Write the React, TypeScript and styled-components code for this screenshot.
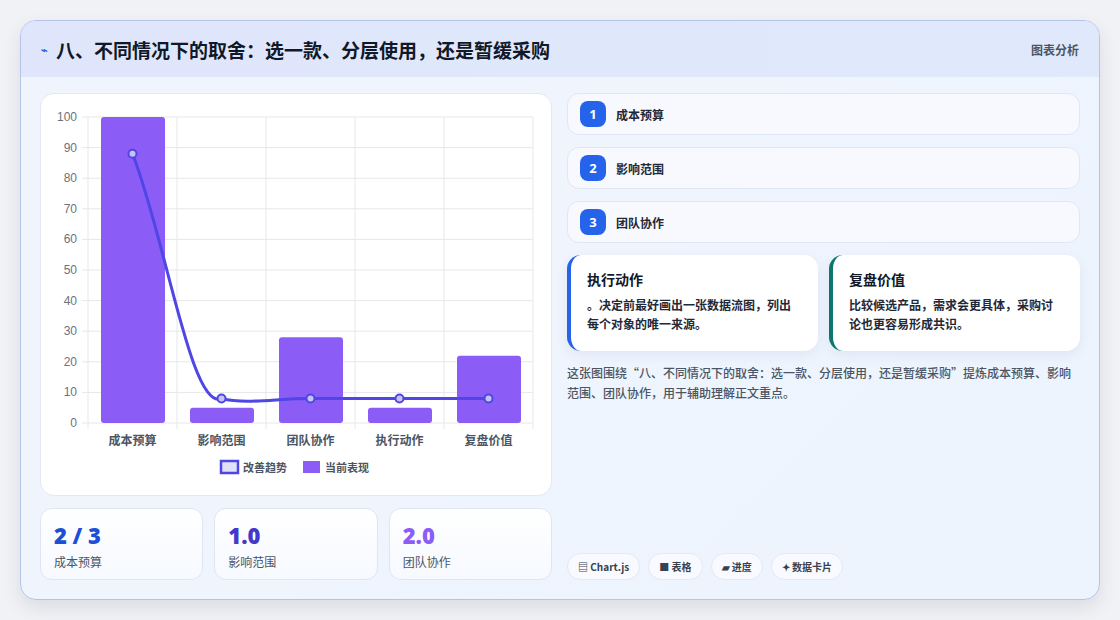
import React from "react";
import styled, { createGlobalStyle } from "styled-components";

const Global = createGlobalStyle`
  html, body { margin: 0; padding: 0; background: #f1f2f5; }
  body { font-family: "Noto Sans CJK SC", "Noto Sans", sans-serif; }
`;

const Page = styled.div`
  width: 1120px; height: 620px; box-sizing: border-box; padding: 20px;
`;
const Card = styled.div`
  height: 580px; box-sizing: border-box; border: 1px solid #b4c3ea; border-radius: 16px;
  background: linear-gradient(135deg, #f1f4fd, #edf4fe); overflow: hidden;
  box-shadow: 0 8px 18px rgba(60, 70, 110, 0.12);
  display: flex; flex-direction: column;
`;
const Header = styled.div`
  height: 56px; flex: none; display: flex; align-items: center; justify-content: space-between;
  padding: 0 20px; background: linear-gradient(90deg, #dfe6fb, #e0e9fc);
`;
const Title = styled.h1`
  margin: 0; font-size: 19px; font-weight: 700; color: #111827; display: flex; align-items: center; gap: 8px;
`;
const Bolt = styled.span` font-size: 11px; color: #2f5fd8; `;
const HeaderTag = styled.span` font-size: 12px; color: #4b5563; font-weight: 600; `;
const Body = styled.div`
  flex: 1; display: grid; grid-template-columns: 512px 513px; gap: 15px; padding: 16px 19px 19px 19px;
`;
const Col = styled.div` display: flex; flex-direction: column; gap: 12px; `;
const ChartCard = styled.div`
  height: 403px; background: #fff; border: 1px solid #e3e8f3; border-radius: 14px; box-sizing: border-box;
`;
const Stats = styled.div` display: grid; grid-template-columns: repeat(3, 1fr); gap: 11px; `;
const Stat = styled.div`
  height: 72px; box-sizing: border-box; border: 1px solid #dfe6f3; border-radius: 12px;
  background: linear-gradient(180deg, #ffffff, #f6f9ff); padding: 12px 13px;
`;
const StatVal = styled.div<{ $c: string }>`
  font-family: "Open Sans", sans-serif; font-size: 22px; font-weight: 800; color: ${p => p.$c}; line-height: 28px;
`;
const StatLabel = styled.div` font-size: 12px; color: #4b5563; margin-top: 4px; `;
const Item = styled.div`
  height: 42px; box-sizing: border-box; border: 1px solid #dfe6f4; border-radius: 12px; background: #f7f9ff;
  display: flex; align-items: center; gap: 10px; padding: 0 12px;
`;
const Num = styled.span`
  width: 26px; height: 26px; border-radius: 8px; background: #2563eb; color: #fff; font-weight: 700; font-size: 13px;
  display: flex; align-items: center; justify-content: center; font-family: "Open Sans", sans-serif;
`;
const ItemText = styled.span` font-size: 12px; font-weight: 600; color: #1f2937; `;
const Pair = styled.div` display: grid; grid-template-columns: 1fr 1fr; gap: 11px; `;
const Note = styled.div<{ $c: string }>`
  height: 96px; box-sizing: border-box; background: #fff; border-radius: 14px; border-left: 4px solid ${p => p.$c};
  padding: 14px 16px 0 16px; box-shadow: 0 4px 12px rgba(90, 110, 170, 0.1);
`;
const NoteTitle = styled.div` font-size: 14px; font-weight: 700; color: #111827; margin-bottom: 6px; `;
const NoteText = styled.div` font-size: 12px; font-weight: 600; color: #1f2937; line-height: 19px; `;
const Desc = styled.p` margin: 0; font-size: 12px; color: #4b5563; line-height: 20px; font-weight: 500; `;
const Chips = styled.div` margin-top: auto; display: flex; gap: 8px; `;
const Chip = styled.span`
  height: 27px; box-sizing: border-box; padding: 0 10px; border-radius: 14px; border: 1px solid #e3e8f2;
  background: #f8faff; font-size: 10px; font-weight: 700; color: #374151; display: flex; align-items: center; gap: 3px;
`;

const cats = ["成本预算", "影响范围", "团队协作", "执行动作", "复盘价值"];
const vals = [100, 5, 28, 5, 22];
const L = 47, R = 492, T = 23, B = 329;
const sy = (v: number) => B - v * ((B - T) / 100);
const cw = (R - L) / 5;

function Chart() {
  return (
    <svg width="512" height="401" viewBox="0 0 512 401">
      {Array.from({ length: 11 }, (_, i) => (
        <g key={i}>
          <line x1={L - 6} x2={R} y1={sy(i * 10)} y2={sy(i * 10)} stroke="#e5e7eb" />
          <text x={36} y={sy(i * 10) + 4} fontSize="12" fill="#6b7280" textAnchor="end" fontFamily="Liberation Sans, sans-serif">{i * 10}</text>
        </g>
      ))}
      {Array.from({ length: 6 }, (_, i) => (
        <line key={i} x1={L + i * cw} x2={L + i * cw} y1={T} y2={B + 6} stroke="#e5e7eb" />
      ))}
      {vals.map((v, i) => (
        <rect key={i} x={L + i * cw + 13} y={sy(v)} width={64} height={B - sy(v)} rx="3" fill="#8b5cf6" />
      ))}
      {cats.map((c, i) => (
        <text key={c} x={L + i * cw + cw / 2} y={351} fontSize="12" fontWeight="600" fill="#4b5563" textAnchor="middle">{c}</text>
      ))}
      <path d={`M91.5 ${sy(88)} C 125 ${sy(60)}, 150 ${sy(4)}, 180.5 ${sy(8)} C 205 ${sy(6)}, 235 ${sy(8)}, 269.5 ${sy(8)} L 447.5 ${sy(8)}`}
        fill="none" stroke="#4f46e5" strokeWidth="3" />
      {[88, 8, 8, 8, 8].map((v, i) => (
        <circle key={i} cx={L + i * cw + cw / 2} cy={sy(v)} r="4" fill="#c7c4f5" stroke="#4f46e5" strokeWidth="2" />
      ))}
      <rect x="180" y="367" width="17" height="12" fill="#e0e0f8" stroke="#4f46e5" strokeWidth="2.5" />
      <text x="202" y="378" fontSize="11" fill="#4b5563" fontWeight="600">改善趋势</text>
      <rect x="262" y="367" width="17" height="12" fill="#8b5cf6" />
      <text x="284" y="378" fontSize="11" fill="#4b5563" fontWeight="600">当前表现</text>
    </svg>
  );
}

export default function App() {
  return (
    <Page>
      <Global />
      <Card>
        <Header>
          <Title><Bolt>⌁</Bolt>八、不同情况下的取舍：选一款、分层使用，还是暂缓采购</Title>
          <HeaderTag>图表分析</HeaderTag>
        </Header>
        <Body>
          <Col>
            <ChartCard><Chart /></ChartCard>
            <Stats>
              <Stat><StatVal $c="#1d4ed8">2 / 3</StatVal><StatLabel>成本预算</StatLabel></Stat>
              <Stat><StatVal $c="#4338ca">1.0</StatVal><StatLabel>影响范围</StatLabel></Stat>
              <Stat><StatVal $c="#8b5cf6">2.0</StatVal><StatLabel>团队协作</StatLabel></Stat>
            </Stats>
          </Col>
          <Col>
            {["成本预算", "影响范围", "团队协作"].map((t, i) => (
              <Item key={t}><Num>{i + 1}</Num><ItemText>{t}</ItemText></Item>
            ))}
            <Pair>
              <Note $c="#2563eb"><NoteTitle>执行动作</NoteTitle><NoteText>。决定前最好画出一张数据流图，列出每个对象的唯一来源。</NoteText></Note>
              <Note $c="#0f766e"><NoteTitle>复盘价值</NoteTitle><NoteText>比较候选产品，需求会更具体，采购讨论也更容易形成共识。</NoteText></Note>
            </Pair>
            <Desc>这张图围绕“八、不同情况下的取舍：选一款、分层使用，还是暂缓采购”提炼成本预算、影响范围、团队协作，用于辅助理解正文重点。</Desc>
            <Chips>
              <Chip>▤ Chart.js</Chip>
              <Chip>■ 表格</Chip>
              <Chip>▰ 进度</Chip>
              <Chip>✦ 数据卡片</Chip>
            </Chips>
          </Col>
        </Body>
      </Card>
    </Page>
  );
}
